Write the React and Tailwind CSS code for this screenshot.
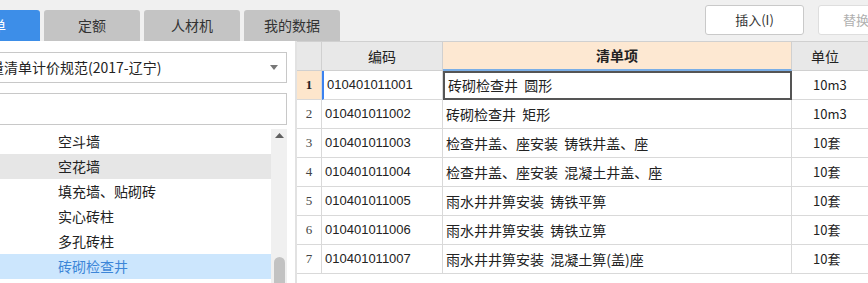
import React from 'react';

const rows = [
  { no: 1, code: '010401011001', name: '砖砌检查井  圆形', unit: '10m3' },
  { no: 2, code: '010401011002', name: '砖砌检查井  矩形', unit: '10m3' },
  { no: 3, code: '010401011003', name: '检查井盖、座安装  铸铁井盖、座', unit: '10套' },
  { no: 4, code: '010401011004', name: '检查井盖、座安装  混凝土井盖、座', unit: '10套' },
  { no: 5, code: '010401011005', name: '雨水井井箅安装  铸铁平箅', unit: '10套' },
  { no: 6, code: '010401011006', name: '雨水井井箅安装  铸铁立箅', unit: '10套' },
  { no: 7, code: '010401011007', name: '雨水井井箅安装  混凝土箅(盖)座', unit: '10套' },
];

const treeItems = ['空斗墙', '空花墙', '填充墙、贴砌砖', '实心砖柱', '多孔砖柱', '砖砌检查井'];

const cjk = "font-['Noto_Sans_CJK_SC','Noto_Sans',sans-serif]";

export default function App() {
  return (
    <div className={`w-[868px] h-[283px] overflow-hidden bg-[#f0f0f0] flex flex-col text-[#222] ${cjk}`}>
      {/* top bar */}
      <div className="h-[41px] flex shrink-0">
        <div className="flex items-end gap-[4px] ml-[-56px]">
          <div className="w-[96px] h-[31px] rounded-t-[3px] bg-[#3d8ee8] text-white text-[14px] flex items-center justify-center">清单</div>
          <div className="w-[96px] h-[31px] rounded-t-[3px] bg-[#c4c4c4] text-[#333] text-[14px] flex items-center justify-center">定额</div>
          <div className="w-[96px] h-[31px] rounded-t-[3px] bg-[#c4c4c4] text-[#333] text-[14px] flex items-center justify-center">人材机</div>
          <div className="w-[96px] h-[31px] rounded-t-[3px] bg-[#c4c4c4] text-[#333] text-[14px] flex items-center justify-center">我的数据</div>
        </div>
        <div className="flex-1" />
        <div className="flex items-start pt-[5px] gap-[14px] mr-[-26px]">
          <div className="w-[99px] h-[30px] bg-white border border-[#c9c9c9] rounded-[3px] text-[13px] text-[#333] flex items-center justify-center">插入(I)</div>
          <div className="w-[76px] h-[30px] bg-white border border-[#dedede] rounded-[3px] text-[13px] text-[#b0b0b0] flex items-center justify-center">替换</div>
        </div>
      </div>

      {/* body */}
      <div className="flex flex-1 min-h-0">
        {/* left panel */}
        <div className="w-[297px] shrink-0 bg-white border-r-2 border-[#e2e2e2] pr-[8px] pt-[11px] flex flex-col overflow-hidden">
          <div className="h-[31px] ml-[-40px] border border-[#c8c8c8] bg-white flex items-center pl-[1px] pr-[8px] text-[14px] text-[#222]">
            <span className="flex-1 whitespace-nowrap">工程量清单计价规范(2017-辽宁)</span>
            <svg width="8" height="5" viewBox="0 0 8 5"><path d="M0 0h8L4 5z" fill="#777" /></svg>
          </div>
          <div className="h-[32px] mt-[10px] ml-[-40px] border border-[#c8c8c8] bg-white" />
          <div className="flex mt-[4px] flex-1 min-h-0">
            <div className="flex-1 flex flex-col">
              {treeItems.map((t, i) => (
                <div
                  key={t}
                  className={`h-[25px] shrink-0 flex items-center pl-[58px] text-[14px] ${
                    i === 1 ? 'bg-[#e6e6e6]' : i === 5 ? 'bg-[#cce6fd] text-[#3d86d8]' : ''
                  }`}
                >
                  {t}
                </div>
              ))}
            </div>
            <div className="w-[16px] bg-[#f0f0f0] flex flex-col items-center">
              <svg className="mt-[4px]" width="9" height="5" viewBox="0 0 9 5"><path d="M0 5L4.5 0L9 5z" fill="#606060" /></svg>
              <div className="flex-1" />
              <div className="w-[11px] h-[26px] rounded-t-[6px] bg-[#c2c2c2]" />
            </div>
          </div>
        </div>

        {/* table */}
        <div className="flex-1 bg-white flex flex-col overflow-hidden">
          <div className="flex h-[30px] border-t border-[#d0d0d0] text-[14px] shrink-0">
            <div className="w-[25px] bg-[#e8e8e8] border-r border-b border-[#d0d0d0]" />
            <div className="w-[121px] bg-[#e8e8e8] border-r border-b border-[#d0d0d0] flex items-center justify-center">编码</div>
            <div className="w-[349px] bg-[#fde8d2] border-r border-b-2 border-r-[#d0d0d0] border-b-[#7aaee6] flex items-center justify-center font-bold">清单项</div>
            <div className="flex-1 bg-[#e8e8e8] border-b border-[#d0d0d0] flex items-center pl-[19px]">单位</div>
          </div>
          {rows.map((r) => {
            const sel = r.no === 1;
            return (
              <div key={r.no} className="flex h-[29px] shrink-0">
                <div
                  className={`w-[25px] border-r border-b border-[#d9d9d9] flex items-center justify-center font-['Liberation_Serif',serif] text-[13px] ${
                    sel ? 'bg-[#fde6cc] font-bold text-[#222]' : 'text-[#444]'
                  }`}
                >
                  {r.no}
                </div>
                <div
                  className={`w-[121px] border-r border-b border-[#d9d9d9] flex items-center pl-[3px] font-['Liberation_Sans',sans-serif] text-[13px] ${
                    sel ? 'border-l-2 border-l-[#3b82f0] pl-[2px]' : ''
                  }`}
                >
                  {r.code}
                </div>
                <div
                  className={`w-[349px] flex items-center pl-[3px] text-[14px] whitespace-pre ${
                    sel ? 'border-2 border-[#555] pl-[2px]' : 'border-r border-b border-[#d9d9d9]'
                  }`}
                >
                  {r.name}
                </div>
                <div className="flex-1 border-b border-[#d9d9d9] flex items-center pl-[21px] text-[13px]">{r.unit}</div>
              </div>
            );
          })}
        </div>
      </div>
    </div>
  );
}
